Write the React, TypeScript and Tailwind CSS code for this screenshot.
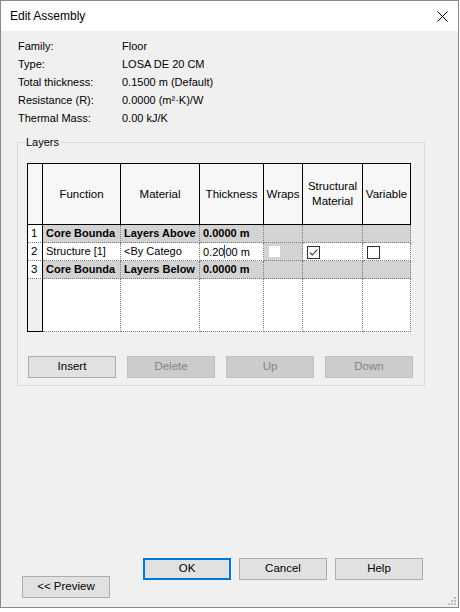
import React from "react";

const cols = ["w-[15px]", "w-[78px]", "w-[79px]", "w-[64px]", "w-[39px]", "w-[60px]", "w-[48px]"];

export default function App() {
  return (
    <div className="h-[612px] w-[460px] bg-white font-['Liberation_Sans',Arial,sans-serif] text-black">
      <div className="relative flex h-[608px] w-[459px] flex-col border border-[#8a8a8a] bg-[#f0f0f0]">
        <TitleBar />
        <InfoBlock />
        <LayersGroup />
        <div className="mt-auto flex items-start pb-[9px] pl-[21px]">
          <Button label="<< Preview" className="mt-[18px]" />
          <Button label="OK" focused className="ml-[33px]" />
          <Button label="Cancel" className="ml-[8px]" />
          <Button label="Help" className="ml-[8px]" />
        </div>
        <svg className="absolute bottom-[2px] right-[2px]" width="8" height="8" viewBox="0 0 8 8">
          <rect x="6" y="0" width="2" height="2" fill="#bcbcbc" />
          <rect x="3" y="3" width="2" height="2" fill="#bcbcbc" />
          <rect x="6" y="3" width="2" height="2" fill="#bcbcbc" />
          <rect x="0" y="6" width="2" height="2" fill="#bcbcbc" />
          <rect x="3" y="6" width="2" height="2" fill="#bcbcbc" />
          <rect x="6" y="6" width="2" height="2" fill="#bcbcbc" />
        </svg>
      </div>
    </div>
  );
}

function TitleBar() {
  return (
    <div className="flex h-[30px] items-center justify-between bg-white pl-[9px] pr-[10px]">
      <span className="text-[12px]">Edit Assembly</span>
      <svg width="11" height="11" viewBox="0 0 11 11">
        <path d="M0.5 0.5 L10.5 10.5 M10.5 0.5 L0.5 10.5" stroke="#000" strokeWidth="1" />
      </svg>
    </div>
  );
}

function InfoBlock() {
  const rows: [string, string][] = [
    ["Family:", "Floor"],
    ["Type:", "LOSA DE 20 CM"],
    ["Total thickness:", "0.1500 m (Default)"],
    ["Resistance (R):", "0.0000 (m²·K)/W"],
    ["Thermal Mass:", "0.00 kJ/K"],
  ];
  return (
    <div className="pl-[17px] pt-[6px] text-[11px]">
      {rows.map(([label, value]) => (
        <div key={label} className="flex h-[18px] items-center">
          <span className="w-[104px]">{label}</span>
          <span>{value}</span>
        </div>
      ))}
    </div>
  );
}

function LayersGroup() {
  return (
    <fieldset className="ml-[16px] mt-[8px] w-[408px] border border-[#d9d9d9] px-[9px] pb-[7px]">
      <legend className="-ml-[2px] px-[1px] text-[11px] leading-[14px]">Layers</legend>
      <LayersTable />
      <div className="mt-[24px] flex gap-[11px] pl-[1px]">
        <Button label="Insert" />
        <Button label="Delete" disabled />
        <Button label="Up" disabled />
        <Button label="Down" disabled />
      </div>
    </fieldset>
  );
}

function LayersTable() {
  const headers = ["", "Function", "Material", "Thickness", "Wraps", "Structural Material", "Variable"];
  return (
    <div className="mt-[14px] w-[384px] border-l border-t border-black text-[11px]">
      <div className="flex h-[61px]">
        {headers.map((h, i) => (
          <div
            key={i}
            className={`${cols[i]} flex items-center justify-center border-b border-r border-black bg-[#f7f7f7] px-[1px] text-center text-[11.5px] leading-[15px]`}
          >
            {h === "Structural Material" ? (
              <span>
                Structural
                <br />
                Material
              </span>
            ) : (
              h
            )}
          </div>
        ))}
      </div>
      <BoundaryRow n="1" material="Layers Above" />
      <div className="flex h-[18px]">
        <NumCell n="2" />
        <Cell w={cols[1]}>Structure [1]</Cell>
        <Cell w={cols[2]}>&lt;By Catego</Cell>
        <Cell w={cols[3]}>
          0.20
          <span className="inline-block h-[13px] w-[1px] translate-y-[2px] bg-[#1a5fb4]" />
          00 m
        </Cell>
        <Cell w={cols[4]} gray>
          <span className="ml-[2px] mt-[3px] block h-[11px] w-[11px] bg-white" />
        </Cell>
        <Cell w={cols[5]}>
          <Checkbox checked />
        </Cell>
        <Cell w={cols[6]}>
          <Checkbox />
        </Cell>
      </div>
      <BoundaryRow n="3" material="Layers Below" />
      <div className="flex h-[53px]">
        <div className={`${cols[0]} border-b border-r border-black bg-[#f0f0f0]`} />
        {cols.slice(1).map((w, i) => (
          <div key={i} className={`${w} border-b border-r border-dotted border-[#7a7a7a] bg-white`} />
        ))}
      </div>
    </div>
  );
}

function BoundaryRow({ n, material }: { n: string; material: string }) {
  return (
    <div className="flex h-[18px] font-bold">
      <NumCell n={n} />
      <Cell w={cols[1]} gray>
        Core Bounda
      </Cell>
      <Cell w={cols[2]} gray>
        {material}
      </Cell>
      <Cell w={cols[3]} gray>
        0.0000 m
      </Cell>
      <Cell w={cols[4]} gray />
      <Cell w={cols[5]} gray />
      <Cell w={cols[6]} gray />
    </div>
  );
}

function NumCell({ n }: { n: string }) {
  return (
    <div
      className={`${cols[0]} border-b border-r border-b-[#7a7a7a] border-r-black bg-white pl-[3px] text-[11.5px] font-normal leading-[17px] [border-bottom-style:dotted]`}
    >
      {n}
    </div>
  );
}

function Cell({ w, gray, children }: { w: string; gray?: boolean; children?: React.ReactNode }) {
  return (
    <div
      className={`${w} overflow-hidden whitespace-nowrap border-b border-r border-dotted border-[#7a7a7a] pl-[3px] leading-[17px] ${
        gray ? "bg-[#d3d3d3]" : "bg-white"
      }`}
    >
      {children}
    </div>
  );
}

function Checkbox({ checked }: { checked?: boolean }) {
  return (
    <span className="ml-[1px] mt-[3px] flex h-[13px] w-[13px] items-center justify-center border border-[#333333] bg-white">
      {checked && (
        <svg width="9" height="9" viewBox="0 0 9 9">
          <path d="M0.8 4.6 L3.3 7 L8.2 1.6" fill="none" stroke="#333333" strokeWidth="1.1" />
        </svg>
      )}
    </span>
  );
}

function Button({
  label,
  disabled,
  focused,
  className = "",
}: {
  label: string;
  disabled?: boolean;
  focused?: boolean;
  className?: string;
}) {
  const look = disabled
    ? "border border-[#bfbfbf] bg-[#cccccc] text-[#838383]"
    : focused
      ? "border-2 border-[#0078d7] bg-[#e1e1e1]"
      : "border border-[#adadad] bg-[#e1e1e1]";
  return (
    <div className={`flex h-[22px] w-[88px] items-center justify-center text-[11.5px] ${look} ${className}`}>
      {label}
    </div>
  );
}
